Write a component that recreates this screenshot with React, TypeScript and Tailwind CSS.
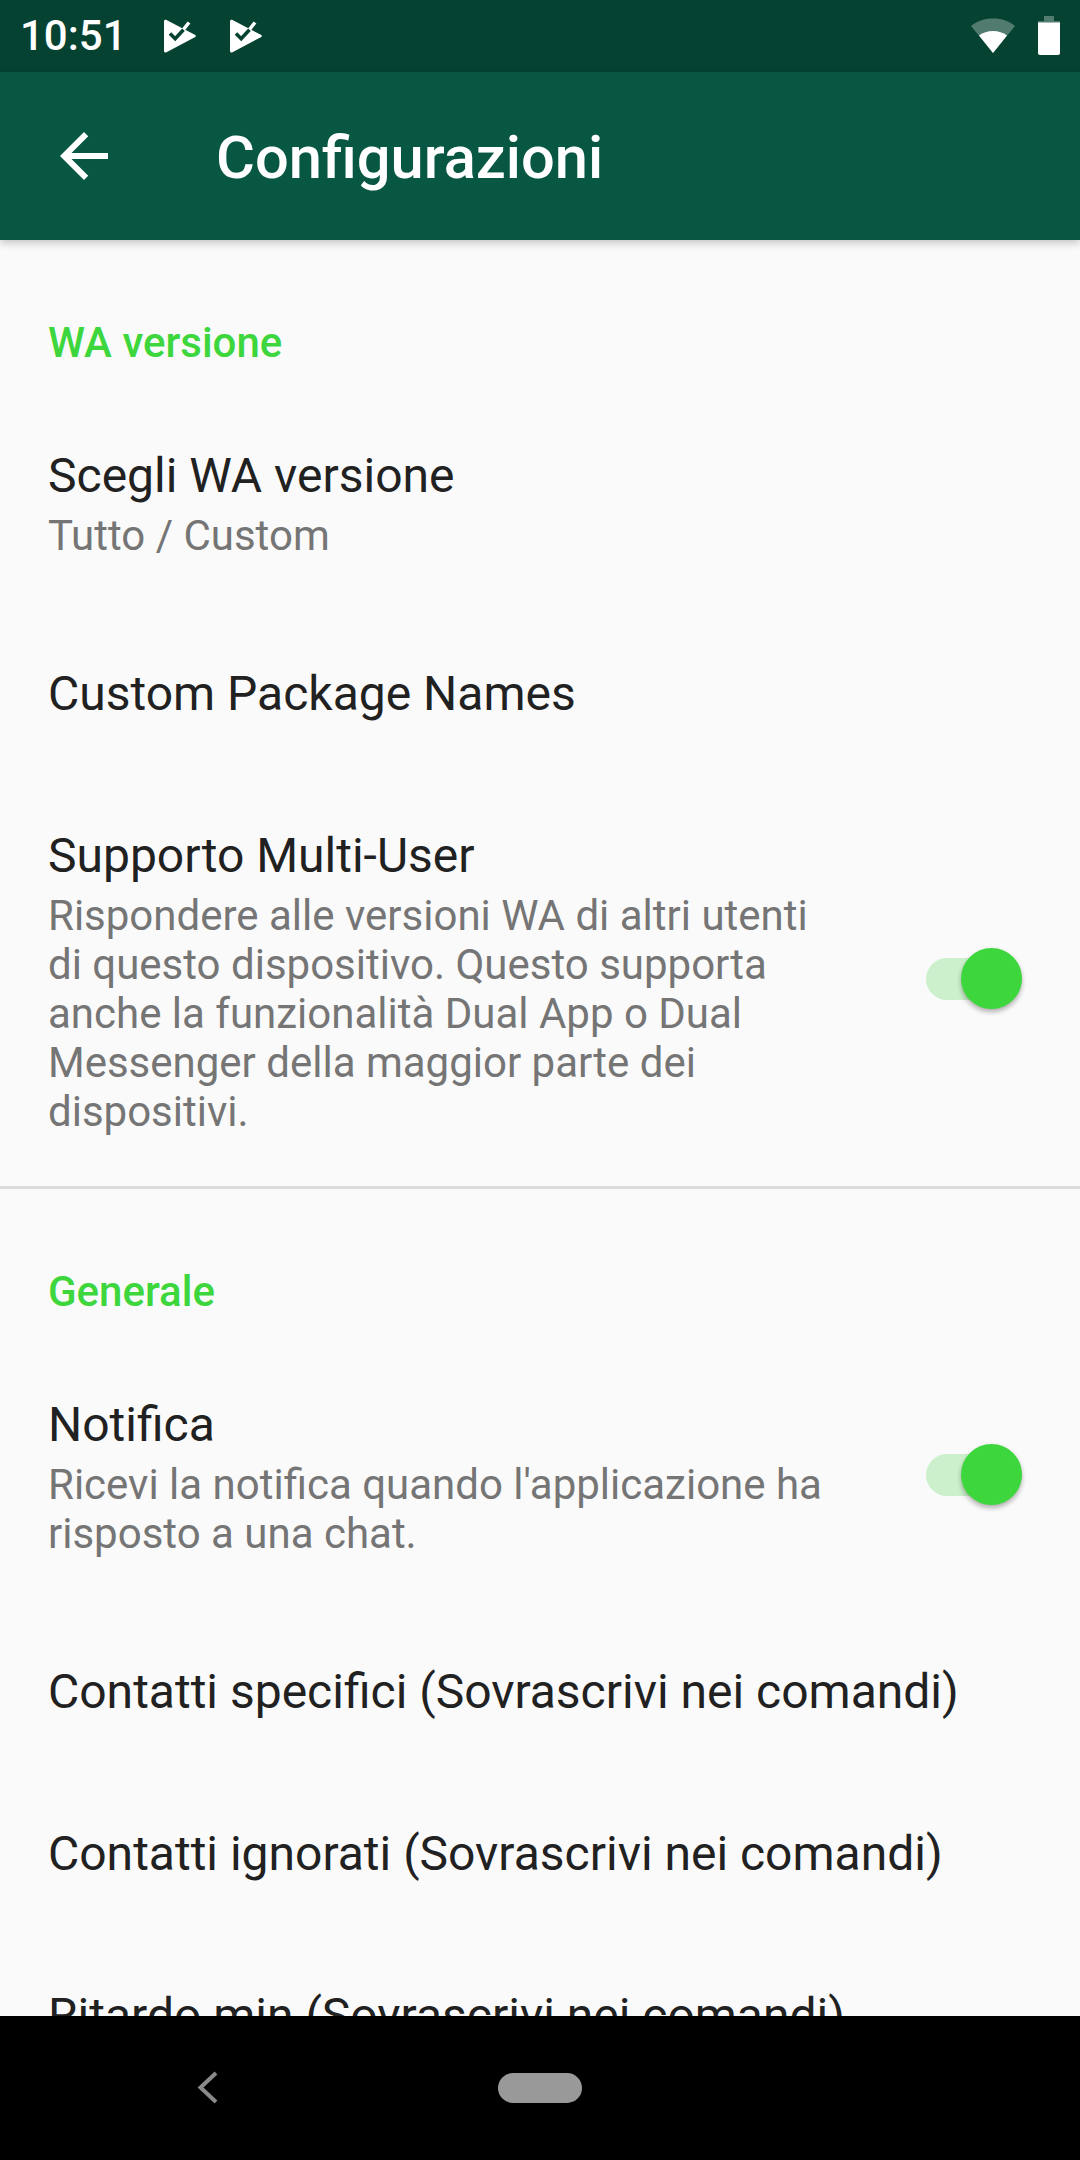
import React from "react";

const font = "font-['Roboto',sans-serif]";

const PlayCheck = () => (
  <svg width="32" height="34" viewBox="0 0 32 34" className="block">
    <path d="M19 11 25 3.500" fill="none" stroke="#fff" strokeWidth="3.500" />
    <path
      d="M0 2.500C0 1 1.200.4 2.500 1L30.800 15.800c1.400.7 1.400 1.700 0 2.400L2.500 33.300C1.200 34 0 33.300 0 31.800Z"
      fill="#fff"
    />
    <path d="M6 14.500 11.200 19.800 19.500 10.800" fill="none" stroke="#064231" strokeWidth="3.500" />
  </svg>
);

const StatusBar = () => (
  <div className="h-[72px] bg-[#064231] flex items-center shrink-0 pl-[20px] pr-[20px]">
    <span className={`${font} text-[42px] leading-[72px] font-medium text-white w-[144px]`}>10:51</span>
    <div className="flex gap-[34px]">
      <PlayCheck />
      <PlayCheck />
    </div>
    <div className="ml-auto flex items-center gap-[22px]">
      <svg width="46" height="38" viewBox="0 0 46 38" className="block">
        <path d="M1 9C7 4 14 1.500 23 1.500S39 4 45 9L23 36Z" fill="#fff" fillOpacity="0.3" />
        <path d="M9 18.500C13 15.500 17.500 14 23 14s10 1.500 14 4.500L23 36Z" fill="#fff" />
      </svg>
      <svg width="22" height="40" viewBox="0 0 22 40" className="block">
        <path d="M6 0h10v5h6v3H0V5h6Z" fill="#fff" fillOpacity="0.3" />
        <path d="M0 6.500h22V37a2 2 0 0 1-2 2H2a2 2 0 0 1-2-2Z" fill="#fff" />
      </svg>
    </div>
  </div>
);

const AppBar = () => (
  <div className="relative z-10 h-[168px] bg-[#085743] flex items-center shrink-0 shadow-[0_3px_8px_rgba(0,0,0,0.22)]">
    <svg width="72" height="72" viewBox="0 0 24 24" className="ml-[48px]" fill="#fff">
      <path d="M20 11H7.830l5.590-5.590L12 4l-8 8 8 8 1.410-1.410L7.830 13H20v-2z" />
    </svg>
    <h1 className={`${font} ml-[96px] pt-[5px] text-[59.600px] font-medium text-white leading-none`}>Configurazioni</h1>
  </div>
);

const SectionHeader = ({ title }: { title: string }) => (
  <div className={`${font} pl-[48px] pt-[78px] pb-[27px] text-[42px] leading-[49px] font-medium text-[#3dd63d]`}>
    {title}
  </div>
);

const Toggle = () => (
  <div className="relative w-[96px] h-[42px] ml-auto mr-[58px] -mt-[4px] rounded-full bg-[#cbf0cb] shrink-0">
    <div className="absolute -top-[10px] right-0 w-[61px] h-[61px] rounded-full bg-[#3dd63d] shadow-[0_3px_5px_rgba(0,0,0,0.3)]" />
  </div>
);

interface RowProps {
  title: string;
  summary?: string[];
  toggle?: boolean;
}

const Row = ({ title, summary, toggle }: RowProps) => (
  <div className="flex items-center pl-[48px] py-[52.5px]">
    <div className={font}>
      <div className="text-[48px] leading-[57px] text-[#212121] whitespace-nowrap">{title}</div>
      {summary && (
        <div className="mt-[7px] text-[42px] leading-[49px] text-[#757575]">
          {summary.map((line) => (
            <div key={line} className="whitespace-nowrap">{line}</div>
          ))}
        </div>
      )}
    </div>
    {toggle && <Toggle />}
  </div>
);

export default function App() {
  return (
    <div className="w-[1080px] h-[2160px] flex flex-col bg-[#fafafa] overflow-hidden">
      <StatusBar />
      <AppBar />
      <main className="flex-1 overflow-hidden">
        <SectionHeader title="WA versione" />
        <Row title="Scegli WA versione" summary={["Tutto / Custom"]} />
        <Row title="Custom Package Names" />
        <Row
          title="Supporto Multi-User"
          toggle
          summary={[
            "Rispondere alle versioni WA di altri utenti",
            "di questo dispositivo. Questo supporta",
            "anche la funzionalità Dual App o Dual",
            "Messenger della maggior parte dei",
            "dispositivi.",
          ]}
        />
        <div className="h-[3px] -mt-[2px] bg-[#dcdcdc]" />
        <SectionHeader title="Generale" />
        <Row
          title="Notifica"
          toggle
          summary={["Ricevi la notifica quando l'applicazione ha", "risposto a una chat."]}
        />
        <Row title="Contatti specifici (Sovrascrivi nei comandi)" />
        <Row title="Contatti ignorati (Sovrascrivi nei comandi)" />
        <Row title="Ritardo min (Sovrascrivi nei comandi)" />
      </main>
      <nav className="h-[144px] bg-black shrink-0 flex items-center">
        <svg width="24" height="34" viewBox="0 0 24 34" className="ml-[196px]" fill="none" stroke="#8a8a8a" strokeWidth="4">
          <path d="M20 2 4.500 16.500 20 31" />
        </svg>
        <div className="ml-[278px] w-[84px] h-[30px] rounded-full bg-[#999999]" />
      </nav>
    </div>
  );
}
